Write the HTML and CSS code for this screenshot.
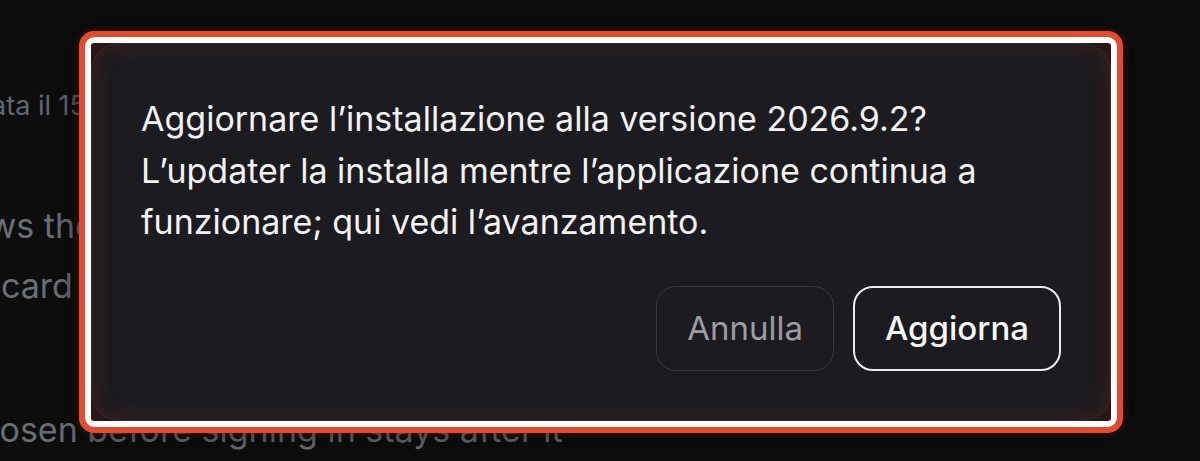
FILE: index.html
```html
<!DOCTYPE html>
<html lang="it">
<head>
<meta charset="utf-8">
<title>Aggiornamento</title>
<link rel="stylesheet" href="styles.css">
</head>
<body>
<main class="page">
  <p class="bg-line meta l1"><span class="cut c1">Aggiorn</span>ata il 15 settembre 2026 alle 10:42</p>
  <p class="bg-line l2"><span class="cut c2">sho</span>ws the current version and the changes</p>
  <p class="bg-line l3">card with release notes</p>
  <p class="bg-line l4"><span class="cut c4">ch</span>osen before signing in stays after it</p>

  <div class="highlight">
    <div class="ring">
      <section class="dialog" role="dialog">
        <p class="message">Aggiornare l’installazione alla versione 2026.9.2? L’updater la installa mentre l’applicazione continua a funzionare; qui vedi l’avanzamento.</p>
        <div class="actions">
          <button class="btn btn-cancel">Annulla</button>
          <button class="btn btn-primary">Aggiorna</button>
        </div>
      </section>
    </div>
  </div>
</main>
</body>
</html>
```
FILE: styles.css
```css
* { box-sizing: border-box; }
html, body {
  margin: 0;
  padding: 0;
  background: #0d0d0e;
  height: 100%;
  overflow: hidden;
}
.page {
  position: relative;
  width: 1200px;
  height: 461px;
  font-family: Inter, "Noto Sans", sans-serif;
  display: flex;
  flex-direction: column;
}
.bg-line {
  margin: 0;
  font-size: 34px;
  line-height: 60px;
  color: #6a6e75;
  white-space: nowrap;
}
.bg-line.meta {
  font-size: 27px;
  color: #626870;
}
.cut { display: inline-block; }
.c1 { margin-left: -110px; }
.c2 { margin-left: -70px; }
.c4 { margin-left: -40px; }
.l1 { margin-top: 76px; }
.l2 { margin-top: 60px; }
.l3 { margin-top: 0; padding-left: 1px; }
.l4 { margin-top: 84px; }

.highlight {
  position: absolute;
  left: 79px;
  top: 31px;
  width: 1044px;
  height: 402px;
  border: 6px solid #e34a2f;
  border-radius: 15px;
  box-shadow: 0 0 10px rgba(227, 74, 47, 0.25), 0 0 26px rgba(0, 0, 0, 0.7);
}
.ring {
  width: 100%;
  height: 100%;
  border: 6px solid #fdfbfa;
  border-radius: 9px;
  background: #2b1515;
}
.dialog {
  width: 100%;
  height: 100%;
  background: #1c1b1f;
  border: 1px solid rgba(255, 255, 255, 0.07);
  border-radius: 28px;
  box-shadow: inset 0 0 22px rgba(170, 50, 30, 0.22);
  padding: 49px 49px 47px 49px;
  display: flex;
  flex-direction: column;
  gap: 38px;
}
.message {
  margin: 0;
  font-size: 34px;
  line-height: 51.5px;
  color: #f3f3f4;
  max-width: 860px;
}
.actions {
  display: flex;
  justify-content: flex-end;
  gap: 19px;
}
.btn {
  font-family: Inter, "Noto Sans", sans-serif;
  font-size: 33px;
  line-height: 51px;
  height: 85px;
  padding: 0 30px;
  border-radius: 20px;
  background: transparent;
  cursor: pointer;
}
.btn-cancel {
  color: #9c9ca2;
  border: 1px solid #38383d;
  font-weight: 400;
}
.btn-primary {
  color: #f7f7f7;
  border: 2px solid #ececec;
  font-weight: 500;
}
```
